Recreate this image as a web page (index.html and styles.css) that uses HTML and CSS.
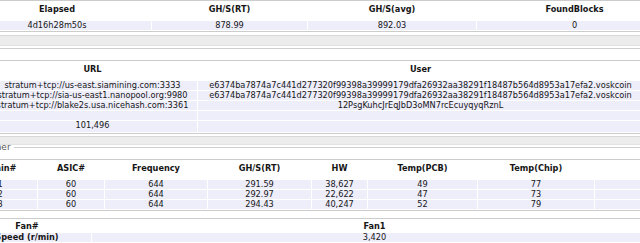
FILE: index.html
```html
<!DOCTYPE html>
<html lang="en">
<head>
  <meta charset="UTF-8">
  <meta name="viewport" content="width=device-width, initial-scale=1.0">
  <title>Miner Status</title>
  <link rel="stylesheet" href="styles.css">
</head>
<body>
  <div class="page">
    <section class="section">
      <table class="grid summary">
        <colgroup>
          <col class="c-elapsed"><col class="c-rt"><col class="c-avg"><col class="c-blocks">
        </colgroup>
        <thead>
          <tr><th>Elapsed</th><th>GH/S(RT)</th><th>GH/S(avg)</th><th>FoundBlocks</th></tr>
        </thead>
        <tbody>
          <tr><td>4d16h28m50s</td><td>878.99</td><td>892.03</td><td>0</td></tr>
        </tbody>
      </table>
      <div class="band band-tall"></div>
    </section>

    <section class="section">
      <div class="section-head"><span class="legend">Pools</span></div>
      <table class="grid pools">
        <colgroup>
          <col class="c-pool"><col class="c-url"><col class="c-user">
        </colgroup>
        <thead>
          <tr><th></th><th>URL</th><th>User</th></tr>
        </thead>
        <tbody>
          <tr><td></td><td>stratum+tcp://us-east.siamining.com:3333</td><td>e6374ba7874a7c441d277320f99398a39999179dfa26932aa38291f18487b564d8953a17efa2.voskcoin</td></tr>
          <tr><td></td><td>stratum+tcp://sia-us-east1.nanopool.org:9980</td><td>e6374ba7874a7c441d277320f99398a39999179dfa26932aa38291f18487b564d8953a17efa2.voskcoin</td></tr>
          <tr><td></td><td>stratum+tcp://blake2s.usa.nicehash.com:3361</td><td>12PsgKuhcJrEqJbD3oMN7rcEcuyqyqRznL</td></tr>
          <tr><td>&nbsp;</td><td>&nbsp;</td><td>&nbsp;</td></tr>
        </tbody>
        <tfoot>
          <tr><td></td><td>101,496</td><td></td></tr>
        </tfoot>
      </table>
      <div class="band"></div>
    </section>

    <section class="section">
      <div class="section-head"><span class="legend">AntMiner</span></div>
      <table class="grid miner">
        <colgroup>
          <col class="c-chain"><col class="c-asic"><col class="c-freq"><col class="c-ghs">
          <col class="c-hw"><col class="c-pcb"><col class="c-chip"><col class="c-status">
        </colgroup>
        <thead>
          <tr><th>Chain#</th><th>ASIC#</th><th>Frequency</th><th>GH/S(RT)</th><th>HW</th><th>Temp(PCB)</th><th>Temp(Chip)</th><th></th></tr>
        </thead>
        <tbody>
          <tr><td>1</td><td>60</td><td>644</td><td>291.59</td><td>38,627</td><td>49</td><td>77</td><td></td></tr>
          <tr><td>2</td><td>60</td><td>644</td><td>292.97</td><td>22,622</td><td>47</td><td>73</td><td></td></tr>
          <tr><td>3</td><td>60</td><td>644</td><td>294.43</td><td>40,247</td><td>52</td><td>79</td><td></td></tr>
        </tbody>
      </table>

      <table class="grid fans">
        <colgroup>
          <col class="c-fan"><col class="c-fan1">
        </colgroup>
        <tbody>
          <tr><th>Fan#</th><th>Fan1</th></tr>
          <tr><th class="row-label">Speed (r/min)</th><td>3,420</td></tr>
        </tbody>
      </table>
    </section>
  </div>
</body>
</html>
```

FILE: styles.css
```css
html, body {
  margin: 0;
  padding: 0;
  background-color: #ffffff;
  overflow: hidden;
}
body {
  font-family: "DejaVu Sans", Verdana, sans-serif;
  font-size: 8.2px;
  color: #161616;
}
.page {
  margin-left: -38px;
  width: 760px;
}

/* sections */
.section-head {
  display: flex;
  align-items: center;
  height: 5px;
  margin-bottom: 9px;
}
.section-head .legend {
  margin-left: 5px;
  padding: 0 3px;
  font-size: 9px;
  line-height: 9px;
  color: #5a5a5a;
}
.section-head::after {
  content: "";
  flex: 1;
  border-top: 1px solid #cfcfcf;
}
.band {
  height: 7px;
  margin-top: 2px;
  background-color: #ececec;
  border-top: 1px solid #d8d8d8;
  border-bottom: 1px solid #e2e2e2;
}
.band-tall {
  height: 9px;
  margin-top: 3px;
}

/* tables */
.grid {
  border-collapse: separate;
  border-spacing: 1px;
  table-layout: fixed;
  border-top: 1px solid #cccccc;
  border-bottom: 1px solid #cccccc;
}
.grid th {
  padding: 3px 4px 7px;
  line-height: 8px;
  font-weight: bold;
  text-align: center;
  background-color: #ffffff;
  white-space: nowrap;
}
.grid td {
  padding: 0 4px;
  line-height: 9px;
  text-align: center;
  background-color: #eeeefb;
  white-space: nowrap;
  overflow: hidden;
}
.pools tfoot td {
  padding-bottom: 2px;
}
.fans {
  margin-top: 7px;
}
.fans th {
  padding: 2px 4px;
}
.fans .row-label {
  padding: 0 4px;
  line-height: 9px;
  background-color: #eeeefb;
}

/* column widths */
.c-elapsed { width: 188px; }
.c-rt { width: 155px; }
.c-avg { width: 168px; }
.c-blocks { width: 195px; }

.c-pool { width: 24px; }
.c-url { width: 209px; }
.c-user { width: 445px; }

.c-chain { width: 74px; }
.c-asic { width: 66px; }
.c-freq { width: 102px; }
.c-ghs { width: 103px; }
.c-hw { width: 55px; }
.c-pcb { width: 109px; }
.c-chip { width: 116px; }
.c-status { width: 100px; }

.c-fan { width: 128px; }
.c-fan1 { width: 565px; }
```
